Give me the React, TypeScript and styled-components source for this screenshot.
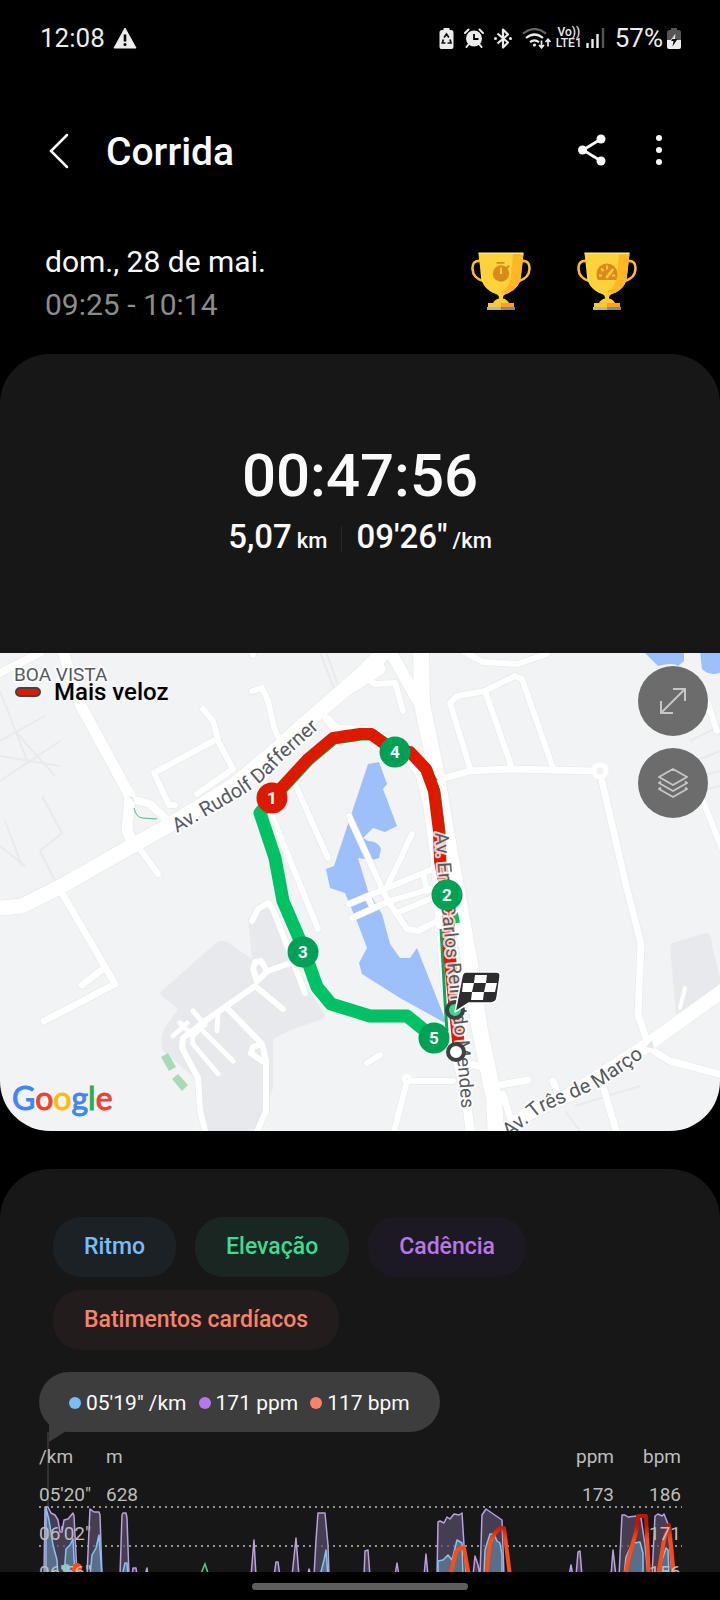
import React from "react";
import styled, { createGlobalStyle } from "styled-components";

const GlobalStyle = createGlobalStyle`
  * { box-sizing: border-box; }
  html, body { margin: 0; background: #000; }
  body { font-family: Roboto, "Noto Sans", sans-serif; color: #fafafa; }
  button { font: inherit; color: inherit; border: 0; padding: 0; background: none; cursor: pointer; }
  h1, p { margin: 0; }
  svg { display: block; }
`;

const Page = styled.div`
  min-height: 100vh;
  display: flex;
  flex-direction: column;
  background: #000;
`;

const StatusBar = styled.div`
  display: flex;
  align-items: center;
  justify-content: space-between;
  height: 76px;
  padding: 0 39px 0 40px;
  font-size: 26px;
  line-height: 32px;
  color: #ececec;
`;

const StatusGroup = styled.div<{ $gap: number }>`
  display: flex;
  align-items: center;
  gap: ${(p) => p.$gap}px;
`;

const NetworkLabel = styled.span`
  display: flex;
  flex-direction: column;
  font-size: 12px;
  font-weight: 500;
  line-height: 11px;
  text-align: center;
`;

const Header = styled.header`
  display: flex;
  align-items: center;
  height: 150px;
  padding: 0 48px 0 44px;
`;

const Title = styled.h1`
  flex: 1;
  margin-left: 32px;
  padding-top: 2px;
  font-size: 39px;
  font-weight: 500;
  line-height: 48px;
`;

const IconButton = styled.button<{ $width: number }>`
  display: flex;
  align-items: center;
  justify-content: center;
  width: ${(p) => p.$width}px;
  height: 40px;
`;

const HeaderActions = styled.div`
  display: flex;
  gap: 40px;
  padding-bottom: 2px;
`;

const Summary = styled.section`
  display: flex;
  justify-content: space-between;
  align-items: flex-start;
  padding: 14px 83px 28px 45px;
`;

const When = styled.p<{ $muted?: boolean }>`
  font-size: 30px;
  line-height: 43px;
  color: ${(p) => (p.$muted ? "#8c8c8c" : "#fafafa")};
`;

const Trophies = styled.div`
  display: flex;
  gap: 46px;
  padding-top: 12px;
`;

const TimeCard = styled.section`
  display: flex;
  flex-direction: column;
  align-items: center;
  height: 299px;
  padding-top: 84px;
  background: #171717;
  border-radius: 50px 50px 0 0;
`;

const Duration = styled.p`
  font-size: 60px;
  font-weight: 500;
  line-height: 76px;
`;

const Stats = styled.div`
  display: flex;
  align-items: center;
  font-weight: 500;
`;

const Stat = styled.p`
  display: flex;
  align-items: baseline;
  gap: 5px;
  font-size: 33px;
  line-height: 46px;
`;

const Unit = styled.span`
  font-size: 22px;
`;

const StatDivider = styled.span`
  width: 1px;
  height: 26px;
  margin: 0 14px;
  background: #262626;
`;

const MapPanel = styled.section`
  position: relative;
  overflow: hidden;
  background: #f1f3f4;
  border-radius: 0 0 50px 50px;

  > svg {
    width: 100%;
    height: auto;
  }
`;

const MapLegend = styled.div`
  position: absolute;
  top: 24px;
  left: 15px;
  display: flex;
  align-items: center;
  gap: 13px;
  font-size: 24px;
  font-weight: 500;
  line-height: 30px;
  color: #000;
`;

const LegendSwatch = styled.span`
  width: 26px;
  height: 10px;
  border: 2px solid #444;
  border-radius: 5px;
  background: #dc1a00;
`;

const MapControls = styled.div`
  position: absolute;
  top: 13px;
  right: 12px;
  display: flex;
  flex-direction: column;
  gap: 12px;
`;

const MapButton = styled.button`
  display: flex;
  align-items: center;
  justify-content: center;
  width: 70px;
  height: 70px;
  border-radius: 50%;
  background: #6c6c6c;
`;

const Attribution = styled.a`
  position: absolute;
  left: 12px;
  bottom: 13px;
  font-family: Lato, Roboto, sans-serif;
  font-size: 32px;
  line-height: 40px;
  text-decoration: none;
  -webkit-text-stroke: 1px currentColor;
`;

const LogoLetter = styled.span<{ $color: string }>`
  color: ${(p) => p.$color};
`;

const ChartCard = styled.section`
  flex: 1;
  margin-top: 38px;
  padding-top: 48px;
  background: #171717;
  border-radius: 50px 50px 0 0;
`;

const Chips = styled.div`
  display: flex;
  flex-wrap: wrap;
  gap: 13px 19px;
  padding: 0 53px;
`;

const Chip = styled.button<{ $tone: string; $fill: string }>`
  height: 60px;
  padding: 0 31px;
  border-radius: 28px;
  background: ${(p) => p.$fill};
  color: ${(p) => p.$tone};
  font-size: 23px;
  font-weight: 500;
  line-height: 28px;
`;

const Tooltip = styled.div`
  position: relative;
  display: inline-flex;
  align-items: center;
  gap: 12px;
  height: 60px;
  margin: 22px 0 0 39px;
  padding: 2px 30px 0;
  border-radius: 30px;
  background: #3d3d3d;
  font-size: 21px;
  line-height: 28px;
  vertical-align: top;
`;

const TooltipTail = styled.svg`
  position: absolute;
  left: 8px;
  top: 50px;
`;

const Reading = styled.span<{ $color: string }>`
  display: flex;
  align-items: center;
  gap: 5px;

  &::before {
    content: "";
    width: 12px;
    height: 12px;
    border-radius: 50%;
    background: ${(p) => p.$color};
  }
`;

const Chart = styled.div`
  display: grid;
  margin: 0 38px;
  height: 140px;
  overflow: hidden;

  > * {
    grid-area: 1 / 1;
  }
`;

const Plot = styled.svg`
  align-self: start;
  width: 100%;
  height: auto;
`;

const AxisTable = styled.table`
  width: 100%;
  height: fit-content;
  padding: 7px 1px 0;
  border-spacing: 0;
  table-layout: fixed;
  font-size: 19px;
  color: #bdbdbd;
`;

const AxisHead = styled.th<{ $right?: boolean }>`
  padding: 0;
  font-weight: 400;
  line-height: 36px;
  text-align: ${(p) => (p.$right ? "right" : "left")};
`;

const AxisCell = styled.td<{ $right?: boolean }>`
  height: 39px;
  padding: 0;
  line-height: 39px;
  text-align: ${(p) => (p.$right ? "right" : "left")};
`;

const NavBar = styled.div`
  display: flex;
  align-items: center;
  justify-content: center;
  height: 28px;
  background: #000;
`;

const NavHandle = styled.span`
  width: 30%;
  height: 7px;
  border-radius: 4px;
  background: #5e5e5e;
`;

const WarningIcon = () => (
  <svg width="24" height="22" viewBox="0 0 24 22" aria-label="Aviso">
    <path d="M12 1 23 21H1Z" fill="#ececec" stroke="#ececec" strokeLinejoin="round" />
    <path d="M12 7.500v7" stroke="#000" strokeWidth="2.600" />
    <circle cx="12" cy="17.500" r="1.500" fill="#000" />
  </svg>
);

const SaverIcon = () => (
  <svg width="15" height="21" viewBox="0 0 14 21">
    <path d="M4 0h6v2h1.500Q14 2 14 4.500V19q0 2-2 2H2q-2 0-2-2V4.500Q0 2 2.500 2H4Z" fill="#ececec" />
    <path d="M4.600 9.500 7 6l2.400 3.500M10.500 11.500l1 3.500H8M6 15H2.800l1.100-3.500" fill="none" stroke="#111" strokeWidth="1.700" />
  </svg>
);

const AlarmIcon = () => (
  <svg width="20" height="20" viewBox="0 0 20 20">
    <path d="M1 5 4.500 1.500M19 5l-3.500-3.500M4.500 16.500 2.500 19M15.500 16.500l2 2.500" stroke="#ececec" strokeWidth="2" strokeLinecap="round" />
    <circle cx="10" cy="10.500" r="8" fill="#ececec" />
    <path d="M10 6v5h4.500" fill="none" stroke="#000" strokeWidth="1.800" />
  </svg>
);

const BluetoothIcon = () => (
  <svg width="18" height="21" viewBox="0 0 18 21">
    <path d="M3.500 5.500 14 14.500 9 19.500V1.500L14 6.500 3.500 15.500" fill="none" stroke="#ececec" strokeWidth="2.200" strokeLinejoin="round" />
    <circle cx="1.500" cy="10.500" r="1.500" fill="#ececec" />
    <circle cx="16.500" cy="10.500" r="1.500" fill="#ececec" />
  </svg>
);

const WifiIcon = () => (
  <svg width="30" height="21" viewBox="0 0 30 21">
    <path d="M1 5.500Q12.500-3.500 24 5.500" fill="none" stroke="#666" strokeWidth="2.200" />
    <path d="M4 10Q12.500 3 21 10M8 14.200q4.500-3.600 9 0" fill="none" stroke="#ececec" strokeWidth="2.200" />
    <circle cx="12.500" cy="17" r="1.600" fill="#ececec" />
    <path d="M19.500 12.500v7m-2.500-2.500 2.500 2.800 2.500-2.800M26 18.500v-7m-2.500 2.500L26 11.200l2.500 2.800" fill="none" stroke="#ececec" strokeWidth="1.700" />
  </svg>
);

const SignalIcon = () => (
  <svg width="19" height="20" viewBox="0 0 19 20">
    <path d="M1.500 20v-5M6.500 20v-9M11.500 20V6" stroke="#ececec" strokeWidth="2.400" />
    <path d="M17 20V0" stroke="#555" strokeWidth="2.400" />
  </svg>
);

const BatteryIcon = () => (
  <svg width="14" height="21" viewBox="0 0 14 21">
    <path d="M4 0h6v2h1.500Q14 2 14 4.500V12H0V4.500Q0 2 2.500 2H4Z" fill="#555" />
    <path d="M0 12h14v7q0 2-2 2H2q-2 0-2-2Z" fill="#ececec" />
    <path d="M8.500 5.500 3.500 12.500H6.500" fill="#ececec" />
    <path d="M10.500 11 5.500 18.500 6.500 13H4L8.500 7 8 11Z" fill="#111" />
    <path d="M8.500 6.500 8 11H5.500Z" fill="#ececec" />
  </svg>
);

const Trophy = ({ kind }: { kind: "time" | "speed" }) => (
  <svg width="60" height="58" viewBox="0 0 60 58" aria-label={kind === "time" ? "Recorde de tempo" : "Recorde de velocidade"}>
    <path d="M10 9Q1 8 1.500 17T12 29M50 9Q59 8 58.500 17T48 29" fill="none" stroke="#fcb93a" strokeWidth="2.600" />
    <path d="M7.500 1.500H52.500L50 24q-1 13-15 18-3 1-3 4h-4q0-3-3-4-14-5-15-18Z" fill="#ffd23c" />
    <path d="M42 2h10.500L50 24q-1 13-15 18l-5-2q9-6 10-16Z" fill="#ffb824" />
    <path d="M9 4q0 26 8 32-6-5-7-12Z" fill="#ffe169" />
    <path d="M7.500 0.500h45v1.500h-45Z" fill="#ffe88a" />
    <path d="M22 51q2-4 6-4.500v-3h4v3q4 .5 6 4.500Z" fill="#ffca38" />
    <path d="M17 51h13v4H17Z" fill="#ffc736" />
    <path d="M30 51h13v4H30Z" fill="#ff9f1c" />
    <path d="M16 55h14v3H16Z" fill="#b5b89a" />
    <path d="M30 55h14v3H30Z" fill="#7f8c8f" />
    {kind === "time" ? (
      <g fill="#d98a1e">
        <path d="M25.500 10h8v1.800h-8ZM35 15l3-2 .8 1-2.500 3Z" />
        <circle cx="30" cy="21.500" r="8.200" />
        <path d="M29.200 15.500h1.600l.4 6.500h-2.400Z" fill="#ffd23c" />
      </g>
    ) : (
      <g>
        <path d="M21 28q-1.500-2-1.500-6a10.500 10.500 0 0 1 21 0q0 4-1.500 6Z" fill="#d98a1e" />
        <path d="M22 23.500h3M35 23.500h3M24 16.500l2.500 2.500M30 13.500v4" stroke="#ffca38" strokeWidth="2" />
        <path d="M30 25l5.500-7" stroke="#ffca38" strokeWidth="2.600" strokeLinecap="round" />
      </g>
    )}
  </svg>
);

type Line = [d: string, width: number];

const roads: Line[] = [
  ["M-5 907H0L22 905 60 886 130 846 173 822 233 785 277 748 300 727 360 675 390 645", 15],
  ["M0 672 40 652", 8],
  ["M62 645 70 675 80 703 130 795 127 830 135 846", 11],
  ["M128 797 150 803 172 824", 8],
  ["M140 848 158 873", 6],
  ["M62 892 115 983 44 1020M103 968 82 984", 7],
  ["M175 804 169 804 154 772 217 738 233 768 197 793", 6],
  ["M203 708 213 720 218 738", 6],
  ["M252 690 262 687 268 700 274 727 281 742M253 645v9", 6],
  ["M295 783 328 857M270 810 318 928", 6],
  ["M327 718 336 728 372 730 403 750 420 773 428 807 435 857 445 980 456 1055 465 1090 471 1135", 9],
  ["M390 650 420 703M360 680 385 652M345 690 380 668", 12],
  ["M421 645 422 703 436 770 446 830 456 885 470 963 480 1030 494 1097 496 1135", 16],
  ["M468 1062 487 1068M500 1084 528 1079M503 1093 510 1116", 7],
  ["M453 1080 407 1080 393 1135M367 1062 380 1054", 6],
  ["M445 777 470 770 510 768 593 770M602 780 625 880 641 943 638 1013 647 1040", 7],
  ["M470 767 450 702 457 695 485 690 515 675 522 678 553 767M485 690 512 767", 6],
  ["M463 650 483 661 517 663 547 653", 6],
  ["M367 677 375 683 395 682 403 710", 6],
  ["M707 700 717 730M703 800 722 848", 6],
  ["M500 1133 527 1113 573 1092 643 1047 725 988", 14],
  ["M650 1048 670 1060 722 1074M603 1085 617 1133M553 1080 558 1093", 7],
  ["M685 987 680 1007", 4],
  ["M349 815 380 883 388 900 407 928 418 930 437 920M412 833 388 884", 6],
  ["M349 903 387 887 433 868M352 917 390 900 430 888M397 912 432 897M423 873 427 890M368 897 373 907", 6],
  ["M252 920 258 908 268 902 273 908 305 992M290 962 268 970 257 980 253 968 255 961 261 960 267 970", 6],
  ["M283 1008 255 985 205 1020 183 1037 182 1047 198 1077 200 1110 206 1133", 6],
  ["M227 1007 262 1043 266 1060 266 1110 256 1133M262 1060 251 1052 253 1046 262 1043", 6],
  ["M218 1073 193 1043 192 1036 205 1022M203 1030 233 1060M193 1010 205 1024M173 1035 187 1022M217 1030 218 1012M180 1022 190 1032", 5],
];

const lanes =
  "M0 690 28 762M0 740 45 715M0 755 60 765M15 730 55 775M0 780 60 740M0 845 25 865M42 795 62 832 40 850 55 880M5 820 22 865M320 652 336 692M326 650 340 690M690 740 720 725M695 760 720 750M700 775 720 770M700 790 720 785M565 1110 580 1130M575 1105 640 1085";

const milestones = [
  { n: 1, x: 272, y: 797, fill: "#dc1a00" },
  { n: 4, x: 395, y: 751, fill: "#00a055" },
  { n: 2, x: 447, y: 894, fill: "#00a055" },
  { n: 3, x: 303, y: 951, fill: "#00a055" },
  { n: 5, x: 434, y: 1037, fill: "#00a055" },
];

const fastRoute = "M272 797 308 758 333 737 360 733 371 733 395 750 410 751 426 768 434 790 439 830 440 860 448 900 449 950 455 1010 459 1050";

const RouteMap = () => (
  <svg viewBox="0 652 720 478" role="img" aria-label="Mapa do percurso">
    <defs>
      <path id="rudolf" d="M177 832 246 792Q266 779 282 760L326 721" />
      <path id="mendes" d="M435 832 439 880 446 950 451 1000 456 1040 463 1125" />
      <path id="marco" d="M509 1137 540 1112 600 1086 655 1048" />
    </defs>
    <g fill="#e8e9ed">
      <path d="M217 941q5-3 10 0l25 17-4-41 22-13 20 58 35 51q0 5-5 6l-27 9-20 10v49l-16 45h-50l-9-52-35-30q-4-15 3-25l12-17-17-14q-2-3 2-5Z" />
      <path d="m670 946 2-4 34-10q4 0 4 3l12 50-46 28Z" />
    </g>
    <path d={lanes} fill="none" stroke="#e8eaec" strokeWidth="2" />
    <g fill="#a8dab5">
      <path d="m161 1056 7-4 8 14-7 4ZM172 1078l6-5 10 11-6 6Z" />
    </g>
    <g fill="#9dc0fb">
      <path d="m368 763 11-2 8 22-4 5 14 37-12 6-12-4-10 10 5 3q10 0 13 8l-2 9-7 2-14-2 10 33 14 23 8 30 10 14h10l7-10 30 76-47-26-38-24-3-11 8-15-9-24-13-31-15-5-4-19 8-3Z" />
      <path d="M645 652 658 665q15-4 20 0l6-5v-10ZM700 650l2 18q8 8 20 3v-21Z" />
    </g>
    <g fill="none" stroke="#e3e6e9" strokeLinejoin="round" strokeLinecap="round">
      {roads.map(([d, w]) => (
        <path key={d} d={d} strokeWidth={w + 1} />
      ))}
    </g>
    <g fill="none" stroke="#fff" strokeLinejoin="round" strokeLinecap="round">
      {roads.map(([d, w]) => (
        <path key={d} d={d} strokeWidth={w} />
      ))}
      <circle cx="600" cy="770" r="6" strokeWidth="5" fill="#f1f3f4" />
      <circle cx="407" cy="1078" r="3" strokeWidth="4" fill="#f1f3f4" />
    </g>
    <path d="m646 1046 6-7 2 9ZM128 795l5 1 2 6Z" fill="#e6e8ea" />
    <path d="m134 807q2 9 8 10l15 1" fill="none" stroke="#5bb97b" />
    <g fill="none" strokeLinejoin="round">
      <path d={fastRoute} stroke="#0ba84f" strokeWidth="11" transform="translate(1 1)" />
      <path d="M369 729 374 730 390 742M422 758 436 780" stroke="#0ba84f" strokeWidth="4" />
      <path d="M441 928 445 1000 447 1030" stroke="#0ba84f" strokeWidth="3" />
      <path d="M455 912 457 922" stroke="#00c265" strokeWidth="6" />
      <path d="m272 797-12 15 15 45 8 43 19 44 15 42 14 17 39 12h37l27 22" stroke="#00c265" strokeWidth="13" />
      <path d={fastRoute} stroke="#dc1a00" strokeWidth="12" />
    </g>
    <g fill="#55595e" fontSize="19" stroke="#fff" strokeWidth="4" strokeOpacity="0.8" strokeLinejoin="round" paintOrder="stroke">
      <text x="14" y="680">BOA VISTA</text>
      <text fontSize="20"><textPath href="#rudolf">Av. Rudolf Dafferner</textPath></text>
      <text><textPath href="#mendes">Av. Eng. Carlos Reinaldo Mendes</textPath></text>
      <text fontSize="20"><textPath href="#marco">Av. Três de Março</textPath></text>
    </g>
    <circle cx="455" cy="1009" r="8" fill="#35d98a" stroke="#3f4042" strokeWidth="4" />
    {milestones.map((m) => (
      <g key={m.n}>
        <circle cx={m.x} cy={m.y} r="15.500" fill={m.fill} />
        <text x={m.x} y={m.y + 6} textAnchor="middle" fontSize="17" fontWeight="700" fill="#fff">
          {m.n}
        </text>
      </g>
    ))}
    <circle cx="456" cy="1051" r="8" fill="#fff" stroke="#3f4042" strokeWidth="4" />
    <path d="M466 971h30q5 0 4 5l-3 21q-1 5-6 5h-22l-14 9 7-36q1-4 4-4Z" fill="#2d2d2f" stroke="#fff" strokeWidth="1.500" strokeLinejoin="round" />
    <g fill="#fff">
      <path d="M475 974h12l-1 8h-12ZM463 982h11l-2 9h-10ZM486 982h11l-2 9h-11ZM472 991h12l-1 8h-12Z" />
    </g>
  </svg>
);

const cadence =
  "M44 1576 45 1507H48L51 1513 55 1515 58 1520 60 1532H62L64 1520 68 1519 73 1513 74 1516 76 1555 77 1576ZM87 1576 89 1530 90 1509 94 1512H99L100 1515 102 1576ZM120 1576 122 1515 123 1513H126L127 1518 129 1576ZM132 1576 133 1568H136L137 1576ZM145 1576 147 1568 148 1576ZM251 1576 254 1540 256 1576ZM274 1576 276 1562H278L280 1576ZM292 1576 296 1538 299 1576ZM308 1576 309 1569 311 1576ZM314 1576 316 1540 318 1513H325L328 1545 329 1576ZM364 1576 365 1551 368 1550 370 1576ZM395 1576 397 1563 399 1576ZM424 1576 426 1554 428 1576ZM437 1576 438 1522 440 1521 444 1523 447 1517 450 1519 454 1514 459 1515 462 1513 464 1545 466 1576ZM473 1576 475 1556 478 1565 480 1576ZM480 1576 482 1515 486 1509 502 1520 504 1576ZM569 1576 571 1565 573 1576ZM576 1576 578 1552 580 1551 582 1576ZM611 1576 613 1550 616 1576ZM619 1576 622 1515 625 1515 628 1517 637 1516 641 1518 645 1545 648 1576ZM652 1576 655 1516 658 1514 662 1516 664 1514 668 1524 672 1576Z";

const pace =
  "M46 1576V1508L49 1520 53 1545 57 1560 58 1576ZM64 1576 66 1549 70 1545 73 1539 75 1576ZM90 1576 92 1555 96 1548 99 1535 102 1576ZM122 1576 125 1563H127L128 1576ZM320 1576 324 1560 326 1550 328 1576ZM438 1576V1561L443 1560 448 1555 452 1560 457 1540 462 1543 463 1576ZM484 1576 485 1550 490 1534H494L497 1541 500 1543 502 1555V1576ZM624 1576 626 1557 631 1546 634 1543 640 1542 643 1553V1576ZM658 1576 662 1560 666 1548 668 1550 669 1576Z";

const heart =
  "M450 1576 456 1552 460 1548H464L469 1576M486 1576 490 1543 495 1533 500 1528H504L510 1576M625 1576 629 1557 636 1532 638 1516H646L649 1576M658 1576 664 1540 669 1525 674 1576";

const MetricsPlot = () => (
  <Plot viewBox="38 1432 644 140" role="img" aria-label="Gráfico de métricas">
    <defs>
      <linearGradient id="heartZone" gradientUnits="userSpaceOnUse" x1="0" y1="1525" x2="0" y2="1540">
        <stop offset="0" stopColor="#c31407" />
        <stop offset="1" stopColor="#fc4c12" />
      </linearGradient>
    </defs>
    <path d="M48 1432V1507" stroke="#4a4a4a" />
    <path d="M39 1507H682M39 1546H682" stroke="#bdbdbd" strokeWidth="1.500" strokeDasharray="2 4" />
    <path d={cadence} fill="#574c69" fillOpacity="0.720" stroke="#b9a0de" strokeWidth="1.500" strokeLinejoin="round" />
    <path d={pace} fill="#5f7b99" fillOpacity="0.800" stroke="#86c4f0" strokeWidth="1.500" strokeLinejoin="round" />
    <path d="M200 1576 205 1564 209 1576" fill="none" stroke="#4fd08d" strokeWidth="1.500" />
    <circle cx="66" cy="1568" r="4" fill="#7ad0c4" />
    <circle cx="77" cy="1568" r="5" fill="#fc4c12" />
    <path d={heart} fill="none" stroke="url(#heartZone)" strokeWidth="4" strokeLinejoin="round" />
  </Plot>
);

const metrics = [
  { label: "Ritmo", tone: "#78bdf8", fill: "#1c2126" },
  { label: "Elevação", tone: "#3cdc91", fill: "#1a2621" },
  { label: "Cadência", tone: "#b877e8", fill: "#1d1923" },
  { label: "Batimentos cardíacos", tone: "#f9826a", fill: "#221c1c" },
];

const googleLetters: [string, string][] = [
  ["G", "#4285f4"],
  ["o", "#ea4335"],
  ["o", "#fbbc05"],
  ["g", "#4285f4"],
  ["l", "#34a853"],
  ["e", "#ea4335"],
];

const axisRows = [
  ["05'20\"", "628", "173", "186"],
  ["06'02\"", "", "", "171"],
  ["06'56\"", "", "", "156"],
];

export default function App() {
  return (
    <Page>
      <GlobalStyle />
      <StatusBar>
        <StatusGroup $gap={8}>
          <span>12:08</span>
          <WarningIcon />
        </StatusGroup>
        <StatusGroup $gap={10}>
          <SaverIcon />
          <AlarmIcon />
          <BluetoothIcon />
          <StatusGroup $gap={4}>
            <WifiIcon />
            <NetworkLabel>
              <span>Vo))</span>
              <span>LTE1</span>
            </NetworkLabel>
            <SignalIcon />
          </StatusGroup>
          <StatusGroup $gap={4}>
            <span>57%</span>
            <BatteryIcon />
          </StatusGroup>
        </StatusGroup>
      </StatusBar>

      <Header>
        <IconButton $width={30} aria-label="Voltar">
          <svg width="20" height="36" viewBox="0 0 20 36" fill="none" stroke="#fafafa" strokeWidth="2.500" strokeLinecap="round">
            <path d="M18 2 2 18 18 34" />
          </svg>
        </IconButton>
        <Title>Corrida</Title>
        <HeaderActions>
          <IconButton $width={28} aria-label="Compartilhar">
            <svg width="28" height="32" viewBox="0 0 28 32" fill="#fafafa">
              <path d="M23 5 5 16 23 27" fill="none" stroke="#fafafa" strokeWidth="2.800" />
              <circle cx="23" cy="5" r="4.500" />
              <circle cx="4.500" cy="16" r="4.500" />
              <circle cx="23" cy="27" r="4.500" />
            </svg>
          </IconButton>
          <IconButton $width={26} aria-label="Mais opções">
            <svg width="8" height="32" viewBox="0 0 8 32" fill="#fafafa">
              <circle cx="4" cy="4" r="3" />
              <circle cx="4" cy="16" r="3" />
              <circle cx="4" cy="28" r="3" />
            </svg>
          </IconButton>
        </HeaderActions>
      </Header>

      <Summary>
        <div>
          <When>dom., 28 de mai.</When>
          <When $muted>09:25 - 10:14</When>
        </div>
        <Trophies>
          <Trophy kind="time" />
          <Trophy kind="speed" />
        </Trophies>
      </Summary>

      <TimeCard>
        <Duration>00:47:56</Duration>
        <Stats>
          <Stat>
            5,07 <Unit>km</Unit>
          </Stat>
          <StatDivider />
          <Stat>
            09'26" <Unit>/km</Unit>
          </Stat>
        </Stats>
      </TimeCard>

      <MapPanel>
        <RouteMap />
        <MapLegend>
          <LegendSwatch />
          Mais veloz
        </MapLegend>
        <MapControls>
          <MapButton aria-label="Ampliar mapa">
            <svg width="30" height="30" viewBox="0 0 30 30" fill="none" stroke="#c6c6c6" strokeWidth="2">
              <path d="M3 27 27 3M15 3H27V15M3 15V27H15" />
            </svg>
          </MapButton>
          <MapButton aria-label="Camadas do mapa">
            <svg width="32" height="32" viewBox="0 0 32 32" fill="none" stroke="#c6c6c6" strokeWidth="2" strokeLinejoin="round">
              <path d="M16 2 30 10 16 18 2 10ZM4 14.500 2 16 16 24 30 16 28 14.500M4 20.500 2 22 16 30 30 22 28 20.500" />
            </svg>
          </MapButton>
        </MapControls>
        <Attribution href="#mapa" aria-label="Google">
          {googleLetters.map(([letter, color], i) => (
            <LogoLetter key={i} $color={color}>
              {letter}
            </LogoLetter>
          ))}
        </Attribution>
      </MapPanel>

      <ChartCard>
        <Chips>
          {metrics.map((m) => (
            <Chip key={m.label} $tone={m.tone} $fill={m.fill}>
              {m.label}
            </Chip>
          ))}
        </Chips>
        <Tooltip>
          <TooltipTail width="20" height="20" viewBox="0 0 20 20">
            <path d="M2 0V20L19 9V0Z" fill="#3d3d3d" />
          </TooltipTail>
          <Reading $color="#78bdf8">05'19" /km</Reading>
          <Reading $color="#b877f0">171 ppm</Reading>
          <Reading $color="#fb826a">117 bpm</Reading>
        </Tooltip>
        <Chart>
          <MetricsPlot />
          <AxisTable>
            <colgroup>
              <col width="67" />
              <col />
              <col width="90" />
              <col width="67" />
            </colgroup>
            <thead>
              <tr>
                <AxisHead>/km</AxisHead>
                <AxisHead>m</AxisHead>
                <AxisHead $right>ppm</AxisHead>
                <AxisHead $right>bpm</AxisHead>
              </tr>
            </thead>
            <tbody>
              {axisRows.map((row) => (
                <tr key={row[0]}>
                  {row.map((value, i) => (
                    <AxisCell key={i} $right={i > 1}>
                      {value}
                    </AxisCell>
                  ))}
                </tr>
              ))}
            </tbody>
          </AxisTable>
        </Chart>
      </ChartCard>
      <NavBar>
        <NavHandle />
      </NavBar>
    </Page>
  );
}
